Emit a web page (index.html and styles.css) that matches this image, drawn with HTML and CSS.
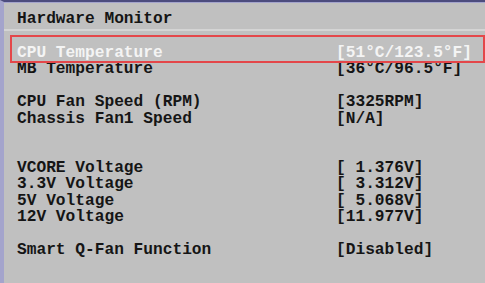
FILE: index.html
```html
<!DOCTYPE html>
<html lang="en">
  <head>
    <meta charset="UTF-8" />
    <meta name="viewport" content="width=device-width, initial-scale=1.0" />
    <title>Hardware Monitor</title>
    <link rel="stylesheet" href="styles.css">
  </head>
  <body>
    <div class="bios">
      <div class="bios-title">Hardware Monitor</div>

      <div class="bios-list">
        <!-- Temperatures -->
        <div class="bios-row selected">
          <span class="label">CPU Temperature</span>
          <span class="value">[51°C/123.5°F]</span>
        </div>
        <div class="bios-row">
          <span class="label">MB Temperature</span>
          <span class="value">[36°C/96.5°F]</span>
        </div>
        <div class="bios-row empty"></div>

        <!-- Fans -->
        <div class="bios-row">
          <span class="label">CPU Fan Speed (RPM)</span>
          <span class="value">[3325RPM]</span>
        </div>
        <div class="bios-row">
          <span class="label">Chassis Fan1 Speed</span>
          <span class="value">[N/A]</span>
        </div>
        <div class="bios-row empty"></div>
        <div class="bios-row empty"></div>

        <!-- Voltages -->
        <div class="bios-row">
          <span class="label">VCORE Voltage</span>
          <span class="value">[ 1.376V]</span>
        </div>
        <div class="bios-row">
          <span class="label">3.3V Voltage</span>
          <span class="value">[ 3.312V]</span>
        </div>
        <div class="bios-row">
          <span class="label">5V Voltage</span>
          <span class="value">[ 5.068V]</span>
        </div>
        <div class="bios-row">
          <span class="label">12V Voltage</span>
          <span class="value">[11.977V]</span>
        </div>
        <div class="bios-row empty"></div>

        <div class="bios-row">
          <span class="label">Smart Q-Fan Function</span>
          <span class="value">[Disabled]</span>
        </div>
      </div>
    </div>
  </body>
</html>
```

FILE: styles.css
```css
:root {
  --bg: #c0c0c0;
  --text: #151515;
  --frame: #4c4c7e;
  --frame-light: #a4a4cc;
  --highlight: #e4474a;
}

* {
  box-sizing: border-box;
}

body {
  margin: 0;
  background-color: var(--bg);
  font-family: 'Liberation Mono', 'Courier New', monospace;
  font-weight: bold;
  font-size: 16.2px;
  color: var(--text);
}

.bios {
  height: 283px;
  border-top: 2px solid var(--frame);
  border-left: 4px solid var(--frame-light);
  overflow: hidden;
}

.bios-title {
  border-top: 1px solid var(--frame-light);
  padding: 8px 0 2px 13px;
  line-height: 16.3px;
  border-bottom: 2px solid #d4d4d4;
}

.bios-list {
  padding: 13.5px 0 0 13px;
}

.bios-row {
  display: grid;
  grid-template-columns: 319px 1fr;
  height: 16.45px;
  line-height: 16.45px;
  white-space: pre;
}

.bios-row.selected {
  position: relative;
  color: #f4f4f4;
}

.bios-row.selected::before {
  content: '';
  position: absolute;
  top: -9.5px;
  bottom: -1.5px;
  left: -7px;
  width: 471px;
  border: 2px solid var(--highlight);
}
```
